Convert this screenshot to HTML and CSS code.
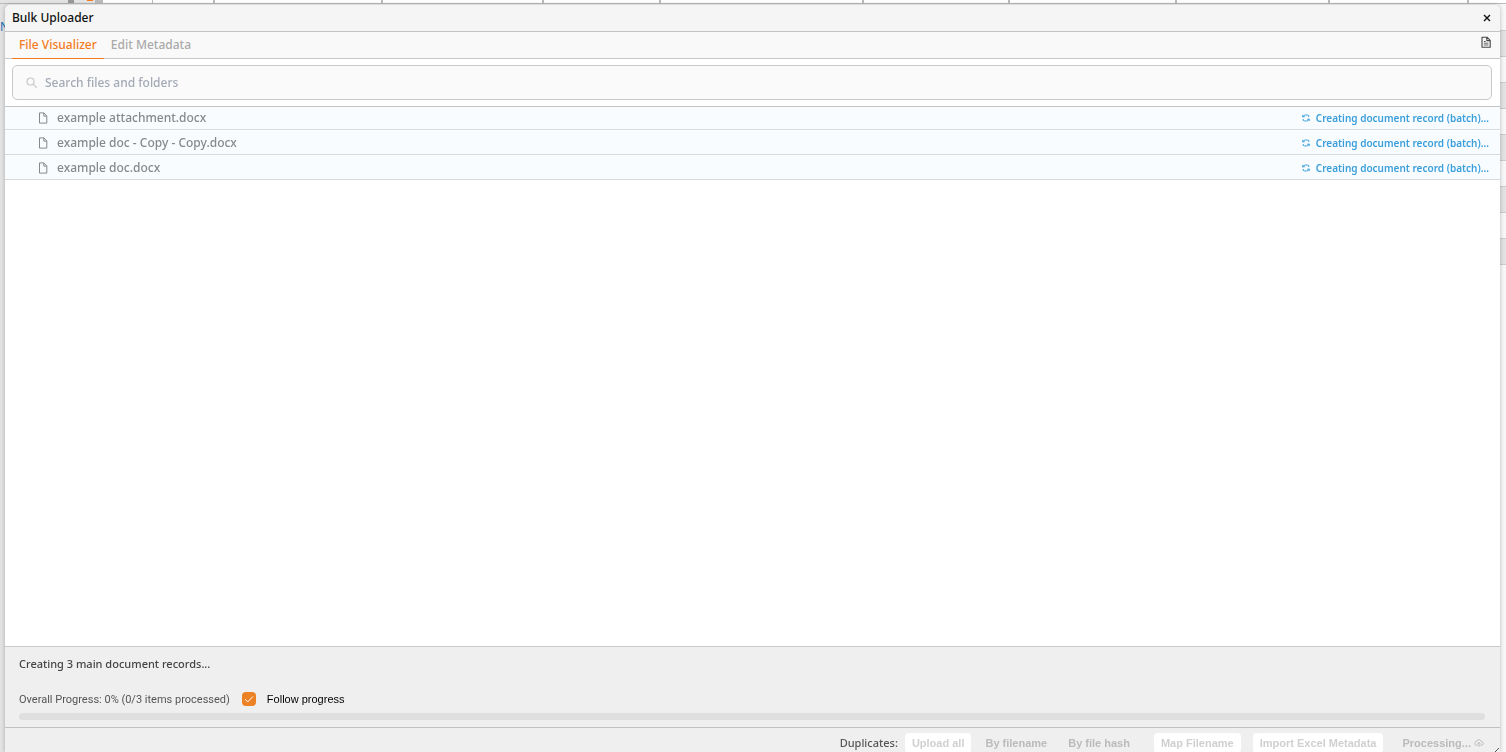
FILE: index.html
```html
<!DOCTYPE html>
<html lang="en">
<head>
  <meta charset="UTF-8" />
  <meta name="viewport" content="width=device-width, initial-scale=1" />
  <title>Bulk Uploader</title>
  <link rel="stylesheet" href="styles.css">
</head>
<body>
  <!-- grid page behind the dialog -->
  <div class="page" aria-hidden="true">
    <div class="page-head">
      <span class="head-tools"><i class="tool-mark"></i><i class="tool-accent"></i><i class="tool-bar"></i></span>
      <span></span><span></span><span></span><span></span><span></span><span></span><span></span><span></span><span></span><span></span><span></span>
    </div>
    <div class="page-body">
      <span class="page-link">N</span>
      <div class="page-rows">
        <div></div><div></div><div></div><div></div><div></div>
        <div></div><div></div><div></div><div></div><div></div>
      </div>
    </div>
  </div>

  <div class="dialog" role="dialog" aria-labelledby="dialogTitle">
    <header class="title-bar">
      <h1 id="dialogTitle">Bulk Uploader</h1>
      <button class="icon-button" type="button" aria-label="Close">
        <svg width="8" height="8" viewBox="0 0 8 8"><path d="M1 1l6 6M7 1L1 7" fill="none" stroke="#111" stroke-width="1.4"/></svg>
      </button>
    </header>

    <nav class="tabs">
      <button class="tab active" type="button">File Visualizer</button>
      <button class="tab" type="button">Edit Metadata</button>
      <button class="icon-button log-button" type="button" aria-label="Log">
        <svg width="10" height="12" viewBox="0 0 10 12"><path d="M1 1.2h5L9.2 4.3v6.9H1zM5.8 1.2v3.4h3.4" fill="none" stroke="#444" stroke-width="1.1" stroke-linejoin="round"/><path d="M2.8 5.5h2M2.8 7.2h4.6M2.8 9h4.6" stroke="#666" stroke-width="1"/></svg>
      </button>
    </nav>

    <div class="search-area">
      <label class="search-box">
        <svg width="12" height="12" viewBox="0 0 12 12"><circle cx="4.5" cy="4.5" r="3.5" fill="none" stroke="#c8c8c8" stroke-width="1.2"/><path d="M7.2 7.2l3.6 3.6" stroke="#c8c8c8" stroke-width="1.2"/></svg>
        <input type="text" placeholder="Search files and folders" aria-label="Search files and folders">
      </label>
    </div>

    <ul class="files">
      <li class="file">
        <svg width="10" height="12" viewBox="0 0 10 12"><path d="M1.5.9h4.3l3 3v7.2H1.5zM5.8.9v3.2H9" fill="none" stroke="#888" stroke-linejoin="round"/></svg>
        <span class="file-name">example attachment.docx</span>
        <svg class="sync" width="8" height="8" viewBox="0 0 8 8"><path d="M.8 3.2V.9M.8 2.8h2M1.1 2.4C2.2.7 5 .6 6.8 1.6V3M7.2 4.8v2.3M7.2 5.2h-2M6.9 5.6C5.8 7.3 3 7.4 1.2 6.4V5" fill="none" stroke="#3a9edb"/></svg>
        <span class="file-state">Creating document record (batch)...</span>
      </li>
      <li class="file">
        <svg width="10" height="12" viewBox="0 0 10 12"><path d="M1.5.9h4.3l3 3v7.2H1.5zM5.8.9v3.2H9" fill="none" stroke="#888" stroke-linejoin="round"/></svg>
        <span class="file-name">example doc - Copy - Copy.docx</span>
        <svg class="sync" width="8" height="8" viewBox="0 0 8 8"><path d="M.8 3.2V.9M.8 2.8h2M1.1 2.4C2.2.7 5 .6 6.8 1.6V3M7.2 4.8v2.3M7.2 5.2h-2M6.9 5.6C5.8 7.3 3 7.4 1.2 6.4V5" fill="none" stroke="#3a9edb"/></svg>
        <span class="file-state">Creating document record (batch)...</span>
      </li>
      <li class="file">
        <svg width="10" height="12" viewBox="0 0 10 12"><path d="M1.5.9h4.3l3 3v7.2H1.5zM5.8.9v3.2H9" fill="none" stroke="#888" stroke-linejoin="round"/></svg>
        <span class="file-name">example doc.docx</span>
        <svg class="sync" width="8" height="8" viewBox="0 0 8 8"><path d="M.8 3.2V.9M.8 2.8h2M1.1 2.4C2.2.7 5 .6 6.8 1.6V3M7.2 4.8v2.3M7.2 5.2h-2M6.9 5.6C5.8 7.3 3 7.4 1.2 6.4V5" fill="none" stroke="#3a9edb"/></svg>
        <span class="file-state">Creating document record (batch)...</span>
      </li>
    </ul>

    <section class="status">
      <p class="status-text">Creating 3 main document records...</p>
      <div class="progress-row">
        <span class="overall">Overall Progress: 0% (0/3 items processed)</span>
        <span class="check">
          <input type="checkbox" id="follow" checked>
          <svg width="14" height="14" viewBox="0 0 14 14"><path d="M3 7.2l2.8 2.7L11 4.4" fill="none" stroke="#fff" stroke-width="1"/></svg>
        </span>
        <label for="follow">Follow progress</label>
      </div>
      <div class="progress" role="progressbar" aria-label="Overall progress" aria-valuenow="0" aria-valuemin="0" aria-valuemax="100"></div>
    </section>

    <footer class="actions">
      <span class="duplicates">Duplicates:</span>
      <button class="selected" type="button" disabled>Upload all</button>
      <button type="button" disabled>By filename</button>
      <button type="button" disabled>By file hash</button>
      <button class="selected map" type="button" disabled>Map Filename</button>
      <button class="selected import" type="button" disabled>Import Excel Metadata</button>
      <button class="processing" type="button" disabled>Processing...
        <svg width="10" height="8" viewBox="0 0 10 8"><path d="M3.8 6.2H2.5C.2 6.1.1 3.2 2.2 2.9 2.5.2 6.7-.1 7.2 2.7c2.7 0 2.8 3.3.4 3.5H6.2M5 7.8V3.6M3.6 4.8L5 3.4l1.4 1.4" fill="none" stroke="#b9b9b9"/></svg>
      </button>
      <svg class="grip" width="4" height="4" viewBox="0 0 4 4"><path d="M0 4l4-4" stroke="#555"/></svg>
    </footer>
  </div>
</body>
</html>
```
FILE: styles.css
```css
* {
  box-sizing: border-box;
}
body {
  margin: 0;
  height: 100vh;
  overflow: hidden;
  font-family: "Noto Sans", "Open Sans", sans-serif;
  font-size: 12px;
  background-color: #f7f7f7;
}
button {
  font: inherit;
  border: none;
  background: none;
  padding: 0;
}
svg {
  flex: none;
}

/* page behind */
.page-head {
  display: grid;
  grid-template-columns: 103fr 50fr 62fr 168fr 161fr 117fr 203fr 146fr 167fr 153fr 139fr 37fr;
  height: 4px;
  border-bottom: 1px solid #bbb;
  background: #fff;
}
.page-head span {
  border-right: 2px solid #bbb;
}
.page-head span:nth-child(2) {
  border-right-width: 1px;
}
.page-head span:last-child {
  border-right: none;
}
.page-head .head-tools {
  display: flex;
  justify-content: flex-end;
  gap: 2px;
  background: #e4e4e4;
  border-right: none;
}
.tool-mark {
  width: 6px;
  height: 3px;
  margin-right: 11px;
  background: #999;
}
.tool-accent {
  width: 6px;
  height: 1px;
  background: #f47b20;
}
.tool-bar {
  width: 8px;
  background: #bbb;
}
.page-body {
  display: flex;
  height: 100vh;
  background: #e3e3e3;
}
.page-link {
  padding-top: 14px;
  color: #1a6fb5;
}
.page-rows {
  flex: 1;
  padding-top: 1px;
  background: #f7f7f7;
}
.page-rows div {
  height: 26px;
  border-bottom: 1px solid #ccc;
}
.page-rows div:nth-child(even) {
  background: #e2e2e2;
}

/* dialog */
.dialog {
  position: fixed;
  inset: 5px 6px 0 5px;
  display: flex;
  flex-direction: column;
  background: #fff;
  border-radius: 5px 5px 0 0;
  box-shadow: 0 0 4px rgba(0, 0, 0, 0.25);
  overflow: hidden;
}
.title-bar {
  display: flex;
  align-items: center;
  justify-content: space-between;
  height: 27px;
  padding: 0 9px 0 7px;
  background: #f5f5f5;
  border-bottom: 1px solid #c4c4c4;
}
.title-bar h1 {
  margin: 0;
  padding-bottom: 2px;
  font-size: 12px;
  font-weight: 500;
  color: #111;
}
.icon-button {
  display: flex;
}
.tabs {
  display: flex;
  height: 27px;
  padding: 0 9px 0 7px;
  background: #f9f9f9;
  border-bottom: 1px solid #c8c8c8;
}
.tab {
  height: 27px;
  padding: 0 7px 2px;
  color: #aaa;
  font-weight: 500;
}
.tab.active {
  padding-bottom: 1px;
  color: #f47b20;
  border-bottom: 1px solid #f47b20;
}
.log-button {
  margin-left: auto;
  padding-top: 4px;
}
.search-area {
  padding: 6px 8px 6px 7px;
  border-bottom: 1px solid #c4c4c4;
}
.search-box {
  display: flex;
  align-items: center;
  gap: 7px;
  height: 35px;
  padding: 0 13px;
  background: #fafafa;
  border: 1px solid #c8c8c8;
  border-radius: 5px;
}
.search-box input {
  flex: 1;
  padding: 0;
  border: none;
  outline: none;
  background: none;
  font: inherit;
  font-weight: 500;
}
.search-box input::placeholder {
  color: #a3a9b5;
}
.files {
  flex: 1;
  margin: 0;
  padding: 0;
  list-style: none;
}
.file {
  display: flex;
  align-items: center;
  height: 25px;
  padding: 0 11px 0 33px;
  line-height: 16px;
  background: #f8fcff;
  border-top: 1px solid #fff;
  border-bottom: 1px solid #d8dadc;
}
.file:first-child {
  height: 23px;
  border-top: none;
}
.file-name {
  flex: 1;
  margin-left: 9px;
  color: #888;
  font-weight: 500;
}
.file-state {
  margin-left: 6px;
  color: #3a9edb;
  font-size: 10px;
  font-weight: 600;
}

/* progress */
.status {
  height: 81px;
  padding: 9px 15px 0 14px;
  background: #efefef;
  border-top: 1px solid #c8c8c8;
}
.status-text {
  margin: 0;
  color: #444;
  font-size: 11px;
  line-height: 16px;
  font-weight: 500;
}
.progress-row {
  display: flex;
  align-items: center;
  height: 16px;
  margin-top: 19px;
  color: #555;
  font-size: 11px;
}
.overall {
  font-family: Roboto, sans-serif;
}
.progress-row label {
  margin-left: 11px;
  color: #000;
  font-family: "Liberation Sans", Arial, sans-serif;
}
.check {
  display: grid;
  margin-left: 12px;
}
.check input,
.check svg {
  grid-area: 1 / 1;
}
.check input {
  appearance: none;
  width: 14px;
  height: 14px;
  margin: 0;
  border-radius: 4px;
  background: #ec8224;
}
.check svg {
  z-index: 1;
  pointer-events: none;
}
.progress {
  height: 7px;
  margin-top: 6px;
  border-radius: 4px;
  background: #dfdfdf;
}

/* footer */
.actions {
  display: flex;
  height: 25px;
  padding: 5px 9px 0 0;
  justify-content: flex-end;
  background: #efefef;
  border-top: 1px solid #c0c0c0;
  font-family: "Liberation Sans", Arial, sans-serif;
  font-size: 11px;
}
.actions button {
  height: 20px;
  margin-right: 7px;
  padding: 0 7px;
  border-radius: 4px;
  color: #bbb;
  font-weight: bold;
}
.actions .selected {
  background: #fff;
  color: #d0d0d0;
}
.actions .map {
  margin-left: 10px;
}
.actions .import {
  margin-left: 5px;
}
.actions .processing {
  margin: 0 0 0 5px;
}
.duplicates {
  margin-right: 7px;
  color: #555;
  font-family: "Noto Sans", "Open Sans", sans-serif;
  font-weight: 500;
  line-height: 20px;
}
.grip {
  position: absolute;
  right: 1px;
  bottom: 0;
}
```
